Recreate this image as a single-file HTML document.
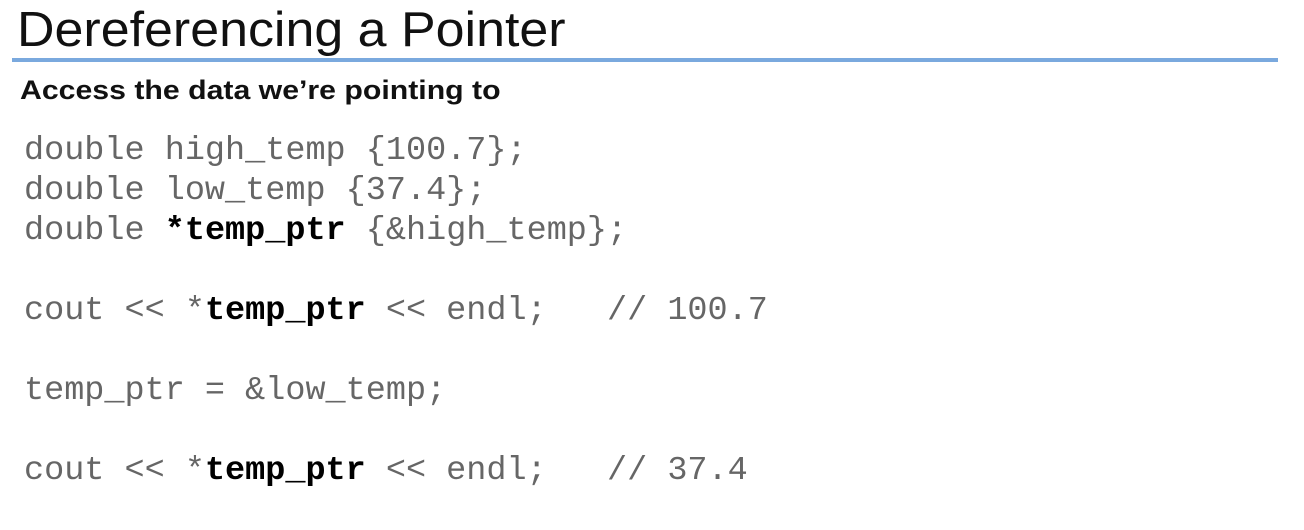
<!DOCTYPE html>
<html><head><style>
body{margin:0;width:1304px;height:530px;background:#fff;position:relative;overflow:hidden}
.t{position:absolute;left:17px;top:2px;font:49px "Liberation Sans",sans-serif;color:#111;white-space:nowrap;transform-origin:0 0;transform:scaleX(1.06)}
.line{position:absolute;left:12px;top:58px;width:1266px;height:4px;background:#7aa9de}
.s{position:absolute;left:20px;top:75px;font:bold 27px "Liberation Sans",sans-serif;color:#111;white-space:nowrap;transform-origin:0 0;transform:scaleX(1.12)}
.c{position:absolute;left:24px;font:33.5px "Liberation Mono",monospace;color:#666;white-space:pre;line-height:40px}
b{color:#000}
</style></head><body>
<div class="t">Dereferencing a Pointer</div>
<div class="line"></div>
<div class="s">Access the data we’re pointing to</div>
<div class="c" style="top:131px">double high_temp {100.7};
double low_temp {37.4};
double <b>*temp_ptr</b> {&amp;high_temp};

cout &lt;&lt; *<b>temp_ptr</b> &lt;&lt; endl;   // 100.7

temp_ptr = &amp;low_temp;

cout &lt;&lt; *<b>temp_ptr</b> &lt;&lt; endl;   // 37.4</div>
</body></html>
